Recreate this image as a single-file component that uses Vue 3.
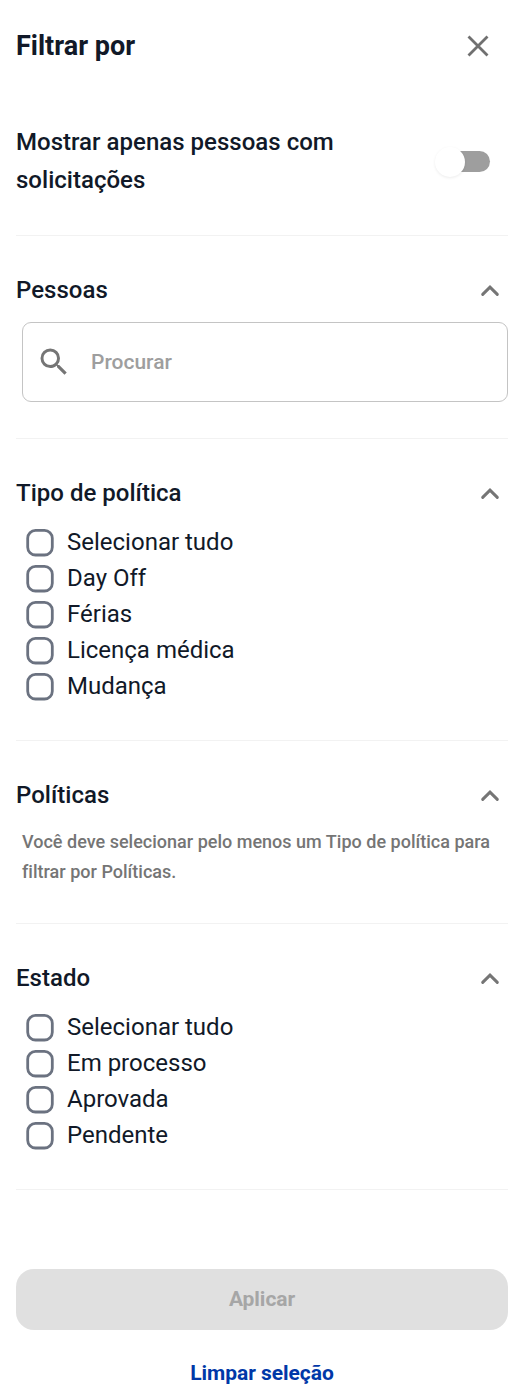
<script setup>
const types = ['Selecionar tudo', 'Day Off', 'Férias', 'Licença médica', 'Mudança']
const states = ['Selecionar tudo', 'Em processo', 'Aprovada', 'Pendente']
const chevron = 'M2.7 11.4 10 4.1l7.3 7.3'
</script>

<template>
  <main class="panel">
    <header class="header">
      <h1>Filtrar por</h1>
      <svg class="close" width="22" height="22" viewBox="0 0 22 22"><path d="M1.5 1.5l19 19M20.5 1.5l-19 19" /></svg>
    </header>
    <section class="only">
      <h2>Mostrar apenas pessoas com solicitações</h2>
      <div class="switch"><span class="knob"></span></div>
    </section>
    <section class="people">
      <div class="head"><h2>Pessoas</h2><svg class="chev" width="20" height="16" viewBox="0 0 20 16"><path :d="chevron" /></svg></div>
      <div class="search">
        <svg width="36" height="36" viewBox="0 0 24 24"><path d="M15.5 14h-.79l-.28-.27A6.471 6.471 0 0 0 16 9.5 6.5 6.5 0 1 0 9.5 16c1.61 0 3.09-.59 4.23-1.57l.27.28v.79l5 4.99L20.49 19l-4.99-5zm-6 0C7.01 14 5 11.99 5 9.5S7.01 5 9.5 5 14 7.01 14 9.5 11.99 14 9.5 14z" /></svg>
        <span>Procurar</span>
      </div>
    </section>
    <section class="types">
      <div class="head"><h2>Tipo de política</h2><svg class="chev" width="20" height="16" viewBox="0 0 20 16"><path :d="chevron" /></svg></div>
      <ul><li v-for="t in types" :key="t"><svg class="box" width="28" height="28" viewBox="0 0 28 28"><rect x="1.7" y="1.4" width="24.6" height="24.6" rx="7.8" /></svg><span>{{ t }}</span></li></ul>
    </section>
    <section class="policies">
      <div class="head"><h2>Políticas</h2><svg class="chev" width="20" height="16" viewBox="0 0 20 16"><path :d="chevron" /></svg></div>
      <p>Você deve selecionar pelo menos um Tipo de política para filtrar por Políticas.</p>
    </section>
    <section class="states">
      <div class="head"><h2>Estado</h2><svg class="chev" width="20" height="16" viewBox="0 0 20 16"><path :d="chevron" /></svg></div>
      <ul><li v-for="s in states" :key="s"><svg class="box" width="28" height="28" viewBox="0 0 28 28"><rect x="1.7" y="1.4" width="24.6" height="24.6" rx="7.8" /></svg><span>{{ s }}</span></li></ul>
    </section>
    <footer>
      <button class="apply">Aplicar</button>
      <button class="clear">Limpar seleção</button>
    </footer>
  </main>
</template>

<style>
body { background: #fff; }
</style>
<style scoped>
* { box-sizing: border-box; margin: 0; padding: 0; }
.panel { width: 526px; height: 1400px; padding: 0 18px 0 16px; overflow: hidden; font-family: Roboto, sans-serif; color: #111928; }
.header { height: 92px; display: flex; align-items: center; justify-content: space-between; padding-right: 19px; }
h1 { font-size: 27px; font-weight: 700; line-height: 38px; }
h2 { font-size: 24px; font-weight: 500; line-height: 38px; letter-spacing: .02px; }
.close path { fill: none; stroke: #707070; stroke-width: 2.8; }
section { border-bottom: 1px solid #f2f2f2; }
.only { height: 144px; padding: 31px 18px 0 0; display: flex; justify-content: space-between; align-items: flex-start; }
.only h2 { width: 350px; }
.switch { width: 50px; height: 21px; margin-top: 28px; border-radius: 11px; background: #9e9e9e; display: flex; align-items: center; }
.knob { flex: none; width: 30px; height: 30px; margin-left: -5px; border-radius: 50%; background: #fff; box-shadow: 0 1px 3px rgba(0, 0, 0, .08); }
.people, .types, .policies, .states { padding-top: 35px; }
.people { height: 203px; }
.types { height: 302px; }
.policies { height: 183px; }
.states { height: 266px; }
.head { height: 38px; display: flex; align-items: center; justify-content: space-between; padding-right: 8px; }
.chev { margin-top: 2px; }
.chev path { fill: none; stroke: #757575; stroke-width: 3; stroke-linecap: round; }
.search { height: 80px; margin: 13px 0 0 6px; border: 1px solid #c4c4c4; border-radius: 9px; display: flex; align-items: center; gap: 19px; padding-left: 13px; font-size: 21px; font-weight: 500; color: #9e9e9e; }
.search svg { fill: #757575; }
ul { list-style: none; padding: 12px 0 0 10px; }
li { height: 36px; display: flex; align-items: center; gap: 13px; font-size: 24px; line-height: 36px; }
.box { flex: none; margin-top: 2px; fill: none; stroke: #6b7280; stroke-width: 2.8; }
p { padding: 13px 0 0 6px; font-size: 18px; font-weight: 500; line-height: 30px; letter-spacing: .01px; color: #757575; }
button { display: block; width: 100%; border: 0; font-family: inherit; font-weight: 700; font-size: 21px; letter-spacing: -.05px; }
footer { padding-top: 79px; }
.apply { height: 61px; padding-bottom: 2px; border-radius: 18px; background: #e0e0e0; color: #a6a6a6; }
.clear { height: 40px; margin-top: 23px; background: transparent; color: #0038a8; }
</style>
